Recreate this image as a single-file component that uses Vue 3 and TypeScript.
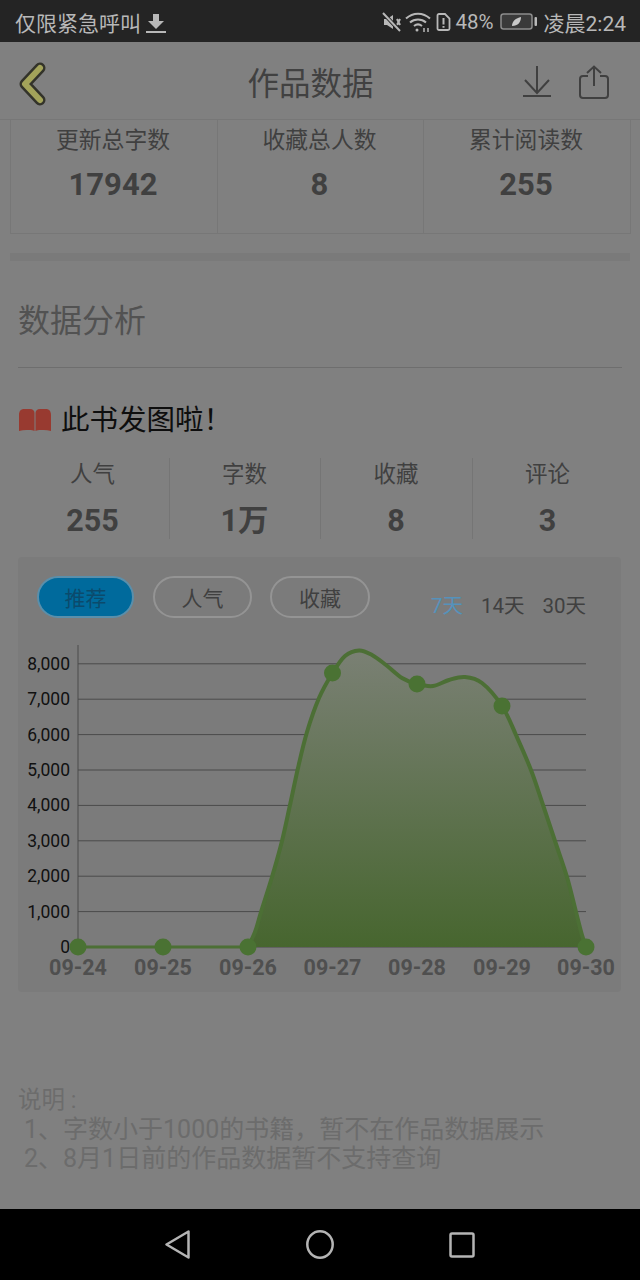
<script setup lang="ts">
const tableCells = [
  { label: '更新总字数', value: '17942' },
  { label: '收藏总人数', value: '8' },
  { label: '累计阅读数', value: '255' },
];
const stats = [
  { label: '人气', value: '255' },
  { label: '字数', value: '1万' },
  { label: '收藏', value: '8' },
  { label: '评论', value: '3' },
];
const pills = ['推荐', '人气', '收藏'];
const ranges = ['7天', '14天', '30天'];

// chart geometry, in page pixels
const yZero = 947;
const yStep = 35.4;
const xLeft = 78;
const xRight = 586;
const yTicks = [0, 1, 2, 3, 4, 5, 6, 7, 8].map((n) => ({
  y: yZero - n * yStep,
  label: n === 0 ? '0' : `${n},000`,
}));
const days = [
  { x: 78, y: 947, label: '09-24' },
  { x: 163, y: 947, label: '09-25' },
  { x: 248, y: 947, label: '09-26' },
  { x: 332.5, y: 673, label: '09-27' },
  { x: 417, y: 684, label: '09-28' },
  { x: 502, y: 706, label: '09-29' },
  { x: 586, y: 947, label: '09-30' },
];
const knots: [number, number][] = [
  [248, 947], [255, 932], [261, 912], [272, 877], [282, 841], [290, 805], [298, 768], [307, 732],
  [319, 698], [332.5, 673], [345, 656], [359, 650.5], [372, 655], [386, 665], [402, 678], [417, 684],
  [433, 686], [449, 680], [465, 677], [482, 683], [502, 706], [516, 735], [531, 770], [543, 805],
  [555, 841], [567, 877], [576, 912], [582, 935], [586, 947],
];

const smooth = (pts: [number, number][]): string => {
  let d = `M${pts[0][0]} ${pts[0][1]}`;
  for (let i = 0; i < pts.length - 1; i++) {
    const p0 = pts[Math.max(i - 1, 0)];
    const p1 = pts[i];
    const p2 = pts[i + 1];
    const p3 = pts[Math.min(i + 2, pts.length - 1)];
    const c1x = p1[0] + (p2[0] - p0[0]) / 6;
    const c1y = p1[1] + (p2[1] - p0[1]) / 6;
    const c2x = p2[0] - (p3[0] - p1[0]) / 6;
    const c2y = p2[1] - (p3[1] - p1[1]) / 6;
    d += ` C${c1x.toFixed(1)} ${c1y.toFixed(1)} ${c2x.toFixed(1)} ${c2y.toFixed(1)} ${p2[0]} ${p2[1]}`;
  }
  return d;
};
const curve = smooth(knots);
const area = `${curve} Z`;
</script>

<template>
  <div class="screen">
    <div class="status-bar">
      <div class="status-left">
        <span>仅限紧急呼叫</span>
        <svg class="dl-mini" width="20" height="22" viewBox="0 0 20 22">
          <path d="M7 2h6v7h5l-8 8-8-8h5z" fill="#b8b8b8" />
          <rect x="0" y="19" width="20" height="2" fill="#b8b8b8" />
        </svg>
      </div>
      <div class="status-right">
        <svg width="20" height="20" viewBox="0 0 20 20" fill="none" stroke="#b8b8b8" stroke-width="2">
          <path d="M2 7h3l6-4v14l-6-4H2z" fill="#b8b8b8" stroke="none" />
          <path d="M15 7l3 6M18 7l-3 6" />
          <path d="M2 2l16 17" stroke="#242424" stroke-width="4" />
          <path d="M1 1l17 18" />
        </svg>
        <svg class="wifi" width="27" height="20" viewBox="0 0 27 20" fill="none" stroke="#b8b8b8" stroke-width="2">
          <path d="M1 6.5c7-6.5 17-6.5 24 0" />
          <path d="M5 10.5c4.500-4 11.500-4 16 0" />
          <path d="M9 14c2.500-2 5.500-2 8 0" />
          <circle cx="12" cy="18" r="1.500" fill="#b8b8b8" stroke="none" />
          <path d="M19 16v4M23 16v4" stroke-width="1.500" />
        </svg>
        <svg class="sim" width="15" height="18" viewBox="0 0 15 18" fill="none" stroke="#b8b8b8" stroke-width="1.800">
          <path d="M1.500 2.500a1.500 1.500 0 0 1 1.500-1.500h6l4.500 4.500v10a1.500 1.500 0 0 1-1.500 1.500H3a1.500 1.500 0 0 1-1.500-1.500z" />
          <path d="M7.500 5v6.500M7.500 13v1.800" stroke-width="2" />
        </svg>
        <span class="pct">48%</span>
        <svg class="battery" width="37" height="18" viewBox="0 0 37 18">
          <rect x="1" y="1" width="31" height="15" rx="2.500" fill="#3a3a3a" stroke="#8c8c8c" stroke-width="1.500" />
          <path d="M12 13c0-5 4-8 9-9 0 5-3 9-9 9z" fill="#c8c8c8" />
          <rect x="34.500" y="4" width="2.500" height="9" rx="1" fill="#b8b8b8" />
        </svg>
        <span class="time">凌晨2:24</span>
      </div>
    </div>

    <header class="app-header">
      <svg class="back" width="40" height="56" viewBox="0 0 40 56" fill="none" stroke-linecap="round" stroke-linejoin="round">
        <path d="M25 15L10 31l15 16" stroke="#33332a" stroke-width="11" />
        <path d="M25 15L10 31l15 16" stroke="#a3a35a" stroke-width="6" />
      </svg>
      <h1 class="app-title">作品数据</h1>
      <div class="app-actions">
        <svg width="28" height="31" viewBox="0 0 28 31" fill="none" stroke="#404040" stroke-width="2">
          <path d="M14 0v27M2 14l12 13 12-13" />
          <path d="M0 30h28" />
        </svg>
        <svg width="30" height="34" viewBox="0 0 30 34" fill="none" stroke="#404040" stroke-width="2">
          <path d="M15 21V1.500M8 8l7-6.500L22 8" />
          <path d="M9 11H4a3 3 0 0 0-3 3v16a3 3 0 0 0 3 3h22a3 3 0 0 0 3-3V14a3 3 0 0 0-3-3h-5" />
        </svg>
      </div>
    </header>

    <main class="content">
      <section class="totals">
        <div v-for="cell in tableCells" :key="cell.label" class="totals-cell">
          <div class="totals-label">{{ cell.label }}</div>
          <div class="totals-value">{{ cell.value }}</div>
        </div>
      </section>
      <div class="band"></div>

      <h2 class="section-title">数据分析</h2>

      <div class="book-row">
        <svg width="32" height="22" viewBox="0 0 32 22">
          <path d="M0 6c0-4 2-6 5-6h6c3 0 4.500 2 4.500 4v18c-3-1.500-5-1-8-1-2.500 0-5 .5-7.500 1z" fill="#983a30" />
          <path d="M32 6c0-4-2-6-5-6h-6c-3 0-4.500 2-4.500 4v18c3-1.500 5-1 8-1 2.500 0 5 .5 7.500 1z" fill="#983a30" />
        </svg>
        <span>此书发图啦！</span>
      </div>

      <div class="stats">
        <div v-for="item in stats" :key="item.label" class="stat">
          <div class="stat-label">{{ item.label }}</div>
          <div class="stat-value">{{ item.value }}</div>
        </div>
      </div>

      <section class="chart-card">
        <div class="chart-tools">
          <div class="pills">
            <span v-for="(pill, i) in pills" :key="pill" class="pill" :class="{ active: i === 0 }">{{ pill }}</span>
          </div>
          <div class="ranges">
            <span v-for="(range, i) in ranges" :key="range" :class="{ current: i === 0 }">{{ range }}</span>
          </div>
        </div>
        <svg class="chart" width="603" height="352" viewBox="18 640 603 352">
          <defs>
            <linearGradient id="areaFill" x1="0" y1="0" x2="0" y2="1">
              <stop offset="0" stop-color="#7a8074" />
              <stop offset="1" stop-color="#47662f" />
            </linearGradient>
          </defs>
          <line :x1="xLeft" :x2="xLeft" y1="645" :y2="yZero" stroke="#4c4c4c" />
          <g v-for="tick in yTicks" :key="tick.label">
            <line :x1="xLeft" :x2="xRight" :y1="tick.y" :y2="tick.y" stroke="#4a4a4a" />
            <text class="y-label" x="70" :y="tick.y + 6" text-anchor="end">{{ tick.label }}</text>
          </g>
          <path :d="area" fill="url(#areaFill)" />
          <path :d="curve" fill="none" stroke="#4c6f35" stroke-width="4" />
          <line x1="78" x2="248" :y1="yZero" :y2="yZero" stroke="#4c6f35" stroke-width="3" />
          <g v-for="day in days" :key="day.label">
            <circle :cx="day.x" :cy="day.y" r="8.500" fill="#4a7233" />
            <text class="x-label" :x="day.x" y="975" text-anchor="middle">{{ day.label }}</text>
          </g>
        </svg>
      </section>

      <section class="notes">
        <div class="note-head">说明 :</div>
        <div class="note-line">1、字数小于1000的书籍，暂不在作品数据展示</div>
        <div class="note-line">2、8月1日前的作品数据暂不支持查询</div>
      </section>
    </main>

    <nav class="nav-bar">
      <svg width="25" height="29" viewBox="0 0 25 29" fill="none" stroke="#b4b4b4" stroke-width="2.500" stroke-linejoin="round">
        <path d="M23.500 1.500v26L1.500 14.500z" />
      </svg>
      <svg width="28" height="29" viewBox="0 0 28 29" fill="none" stroke="#b4b4b4" stroke-width="2.500">
        <ellipse cx="14" cy="14.500" rx="12.700" ry="13.200" />
      </svg>
      <svg width="26" height="26" viewBox="0 0 26 26" fill="none" stroke="#b4b4b4" stroke-width="2.500">
        <rect x="1.500" y="1.500" width="23" height="23" rx="1.500" />
      </svg>
    </nav>
  </div>
</template>

<style>
html,
body {
  margin: 0;
  background: #808080;
}
</style>

<style scoped>
.screen {
  display: flex;
  flex-direction: column;
  width: 640px;
  height: 1280px;
  overflow: hidden;
  background: #808080;
  font-family: Roboto, "Noto Sans CJK SC", sans-serif;
  color: #404040;
}

.status-bar {
  display: flex;
  align-items: center;
  justify-content: space-between;
  height: 42px;
  padding: 1px 14px 0 15px;
  box-sizing: border-box;
  background: #242424;
  color: #b8b8b8;
  font-size: 20px;
}

.status-left {
  display: flex;
  align-items: center;
  gap: 5px;
  font-size: 21px;
}

.dl-mini {
  margin-top: 2px;
}

.status-right {
  display: flex;
  align-items: center;
}

.wifi {
  margin-left: 3px;
}

.sim {
  margin-left: 4px;
}

.pct {
  margin-left: 4px;
  font-size: 20.5px;
}

.battery {
  margin-left: 6px;
}

.time {
  margin-left: 7px;
  font-size: 21px;
}

.app-header {
  display: grid;
  grid-template-columns: 1fr auto 1fr;
  align-items: center;
  height: 77px;
  padding: 0 31px 0 15px;
  border-bottom: 1px solid #777;
}

.back {
  display: block;
}

.app-title {
  margin: 0 3px 0 0;
  font-size: 31.500px;
  font-weight: 400;
  color: #414141;
}

.app-actions {
  display: flex;
  align-items: center;
  justify-content: flex-end;
  gap: 28px;
  margin-top: 2px;
}

.content {
  flex: 1;
}

.totals {
  display: grid;
  grid-template-columns: 206px 206px 207px;
  width: 621px;
  height: 114px;
  margin-left: 10px;
  box-sizing: border-box;
  border: 1px solid #777;
  border-top: none;
}

.totals-cell {
  padding-right: 2px;
  text-align: center;
  border-left: 1px solid #777;
}

.totals-cell:first-child {
  border-left: none;
}

.totals-label {
  font-size: 22.8px;
  line-height: 41px;
}

.totals-value {
  font-size: 31px;
  font-weight: 700;
  line-height: 48px;
}

.band {
  height: 8px;
  margin: 19px 10px 0;
  background: #7a7a7a;
}

.section-title {
  margin: 0 18px;
  padding: 40px 0 26px;
  border-bottom: 1px solid #6e6e6e;
  font-size: 32px;
  font-weight: 400;
  line-height: 40px;
  color: #525252;
}

.book-row {
  display: flex;
  align-items: center;
  gap: 10px;
  height: 40px;
  margin: 32px 18px 0 19px;
  font-size: 28.500px;
  color: #0e0e0e;
}

.book-row span {
  padding-bottom: 6px;
}

.stats {
  display: grid;
  grid-template-columns: 151px 151px 152px 151px;
  height: 80px;
  margin: 18px 0 0 18px;
}

.stat {
  padding-right: 1px;
  text-align: center;
  border-left: 1px solid #757575;
}

.stat:first-child {
  border-left: none;
  padding-right: 2px;
}

.stat-label {
  font-size: 22.5px;
  line-height: 32px;
}

.stat-value {
  margin-top: 13px;
  font-size: 30.5px;
  font-weight: 700;
  line-height: 36px;
}

.chart-card {
  width: 603px;
  margin: 19px 0 0 18px;
  padding-top: 19px;
  background: #7b7b7b;
  border-radius: 4px;
}

.chart-tools {
  display: flex;
  justify-content: space-between;
  height: 42px;
  padding: 0 35px 0 19px;
}

.pills {
  display: flex;
  gap: 18px;
}

.pill {
  display: flex;
  align-items: center;
  justify-content: center;
  width: 99px;
  box-sizing: border-box;
  border: 2px solid #949494;
  border-radius: 21px;
  font-size: 21px;
}

.pill.active {
  width: 97px;
  margin-right: 1px;
  background: #006a9c;
  border-color: #5a8fab;
  color: #0b4a6c;
}

.pill:last-child {
  width: 100px;
}

.ranges {
  display: flex;
  align-self: flex-end;
  gap: 18px;
  font-size: 20.5px;
  line-height: 24px;
}

.ranges .current {
  color: #5592bb;
}

.chart {
  display: block;
  margin-top: 22px;
}

.y-label {
  fill: #111;
  font-size: 17.500px;
}

.x-label {
  fill: #4f4f4f;
  font-size: 21.500px;
  font-weight: 700;
}

.notes {
  margin: 94px 0 0 18px;
  font-size: 25px;
  line-height: 29px;
  color: #6c6c6c;
}

.note-head {
  font-size: 23.5px;
}

.note-line {
  margin-left: 6px;
}

.nav-bar {
  display: flex;
  align-items: center;
  justify-content: center;
  gap: 115.5px;
  height: 71px;
  background: #000;
}
</style>
